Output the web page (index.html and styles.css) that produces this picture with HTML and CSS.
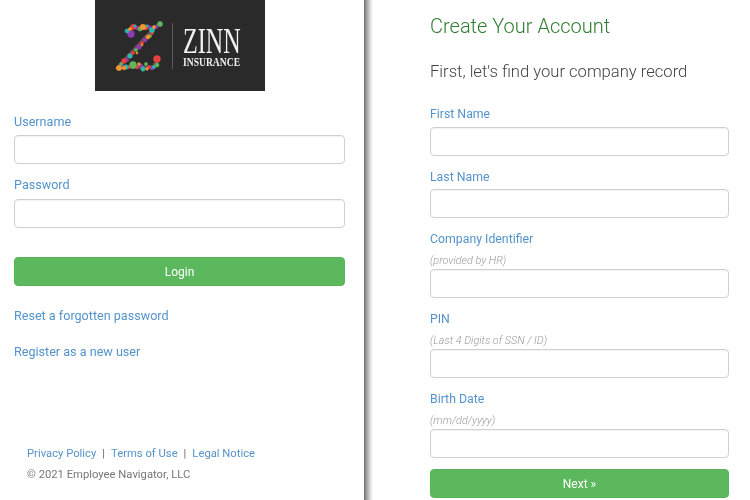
FILE: index.html
```html
<!DOCTYPE html>
<html lang="en">
<head>
<meta charset="utf-8">
<title>Create Your Account</title>
<link rel="stylesheet" href="styles.css">
</head>
<body>
<div class="page">
  <aside class="login">
    <div class="logo">
      <svg class="logo-z" width="52" height="52" viewBox="0 0 52 52" aria-hidden="true">
        <path class="z-base" d="M14 11 L20 7 L40 8 L47 4 M40 9 L5 47 L40 47 L44 40"/>
        <g class="dot-purple"><circle cx="18" cy="14" r="3.400"/><circle cx="24" cy="8" r="1.800"/><circle cx="36" cy="7" r="1.800"/><circle cx="43" cy="7" r="1.800"/><circle cx="32" cy="20" r="2"/><circle cx="26" cy="27" r="2.300"/><circle cx="14" cy="40" r="1.800"/><circle cx="28" cy="46" r="2"/><circle cx="39" cy="48" r="2"/><circle cx="9" cy="45" r="1.500"/></g>
        <g class="dot-red"><circle cx="20" cy="7" r="2.600"/><circle cx="33" cy="8" r="1.800"/><circle cx="39" cy="13" r="1.500"/><circle cx="29" cy="23" r="1.500"/><circle cx="20" cy="33" r="1.500"/><circle cx="11" cy="41" r="2.400"/><circle cx="24" cy="47" r="1.800"/><circle cx="36" cy="47" r="1.500"/><circle cx="44" cy="39" r="3.400"/><circle cx="16" cy="47" r="1.500"/></g>
        <g class="dot-green"><circle cx="27" cy="9" r="2"/><circle cx="47" cy="4" r="2.500"/><circle cx="37" cy="16" r="1.500"/><circle cx="23" cy="30" r="1.500"/><circle cx="8" cy="44" r="1.500"/><circle cx="20" cy="45" r="3.400"/><circle cx="44" cy="45" r="2"/><circle cx="33" cy="44" r="1.500"/></g>
        <g class="dot-teal"><circle cx="14" cy="11" r="2"/><circle cx="39" cy="10" r="2.500"/><circle cx="34" cy="6" r="1.200"/><circle cx="17" cy="36" r="2.300"/><circle cx="13" cy="47" r="2.200"/><circle cx="30" cy="49" r="2.200"/><circle cx="41" cy="47" r="1.500"/><circle cx="22" cy="6" r="1.200"/></g>
        <g class="dot-orange"><circle cx="30" cy="7" r="2.800"/><circle cx="17" cy="9" r="1.500"/><circle cx="35" cy="17" r="2"/><circle cx="41" cy="7" r="1.500"/><circle cx="24" cy="33" r="1"/><circle cx="6" cy="48" r="2.600"/><circle cx="11" cy="48" r="1.800"/><circle cx="26" cy="44" r="1.300"/><circle cx="34" cy="49" r="1.300"/><circle cx="29" cy="25" r="1"/></g>
      </svg>
      <span class="logo-rule"></span>
      <div class="logo-text">
        <span class="logo-name">ZINN</span>
        <span class="logo-sub">INSURANCE</span>
      </div>
    </div>
    <form class="login-form">
      <label class="field-label" for="username">Username</label>
      <input class="input" id="username" type="text">
      <label class="field-label password-label" for="password">Password</label>
      <input class="input" id="password" type="password">
      <button class="btn login-btn" type="button">Login</button>
    </form>
    <a class="side-link reset-link" href="#">Reset a forgotten password</a>
    <a class="side-link register-link" href="#">Register as a new user</a>
    <footer class="legal">
      <div class="legal-links"><a href="#">Privacy Policy</a><span class="sep">|</span><a href="#">Terms of Use</a><span class="sep">|</span><a href="#">Legal Notice</a></div>
      <div class="copyright">© 2021 Employee Navigator, LLC</div>
    </footer>
  </aside>
  <div class="divider"></div>
  <main class="signup">
    <h1 class="title">Create Your Account</h1>
    <h2 class="subtitle">First, let's find your company record</h2>
    <form class="signup-form">
      <div class="group group-first"><label class="field-label" for="first">First Name</label><input class="input" id="first" type="text"></div>
      <div class="group"><label class="field-label" for="last">Last Name</label><input class="input" id="last" type="text"></div>
      <div class="group"><label class="field-label" for="company">Company Identifier</label><div class="hint">(provided by HR)</div><input class="input" id="company" type="text"></div>
      <div class="group"><label class="field-label" for="pin">PIN</label><div class="hint">(Last 4 Digits of SSN / ID)</div><input class="input" id="pin" type="text"></div>
      <div class="group"><label class="field-label" for="birth">Birth Date</label><div class="hint">(mm/dd/yyyy)</div><input class="input" id="birth" type="text"></div>
      <button class="btn next-btn" type="button">Next »</button>
    </form>
  </main>
</div>
</body>
</html>
```
FILE: styles.css
```css
* { box-sizing: border-box; }
html, body { margin: 0; padding: 0; }
body {
  width: 750px;
  height: 500px;
  overflow: hidden;
  background: #fff;
  font-family: Roboto, "Liberation Sans", sans-serif;
  color: #555;
}
.page { display: flex; height: 500px; filter: blur(0.4px); }
.login { width: 364px; flex: none; padding: 0 19px 0 14px; display: flex; flex-direction: column; }
.divider {
  width: 9px;
  flex: none;
  background: linear-gradient(to right, #6f6f6f, #a9a9a9 35%, #e2e2e2 75%, #fff);
}
.signup { flex: 1; padding: 15px 21px 0 57px; min-width: 0; }

.logo {
  width: 170px;
  height: 91px;
  margin-left: 81px;
  background: #2a2a2a;
  display: flex;
  align-items: flex-start;
  padding-left: 18px;
  flex: none;
}
.logo-z { flex: none; margin-top: 20px; }
.z-base { fill: none; stroke: #6b4a55; stroke-width: 3; }
.dot-purple circle, .dot-red circle, .dot-green circle, .dot-teal circle, .dot-orange circle { stroke-width: .7; }
.dot-purple { fill: #8e3ab5; stroke: #8e3ab5; }
.dot-red { fill: #e8413c; stroke: #e8413c; }
.dot-green { fill: #5cb85c; stroke: #5cb85c; }
.dot-teal { fill: #2fb8a8; stroke: #2fb8a8; }
.dot-orange { fill: #f0972e; stroke: #f0972e; }
.logo-rule { width: 1px; height: 46px; background: #5a5a5a; margin: 23px 10px 0 7px; flex: none; }
.logo-text { display: flex; flex-direction: column; width: 60px; margin-top: 28px; color: #f0f0f0; white-space: nowrap; }
.logo-name { font-family: "Liberation Serif", serif; font-size: 36px; line-height: 26px; transform: scaleX(.67); transform-origin: left; }
.logo-sub { font-family: "Liberation Serif", serif; font-weight: 700; font-size: 12px; line-height: 10px; margin-top: 3px; transform: scaleX(.8); transform-origin: left; }

.field-label { display: block; font-size: 12.600px; line-height: 16px; color: #5593cb; }
.input {
  display: block;
  width: 100%;
  height: 29px;
  padding: 0 10px;
  background: #fff;
  border: 1px solid #d0d0d0;
  border-radius: 4px;
  box-shadow: inset 0 1px 1px rgba(0,0,0,.05);
  outline: none;
}
.btn {
  display: block;
  width: 100%;
  height: 29px;
  background: #5cb85c;
  border: 1px solid #57b557;
  border-radius: 4px;
  color: #fff;
  font: 12px/1 Roboto, "Liberation Sans", sans-serif;
  padding: 0;
}

.login-form { margin-top: 23px; }
.login-form .input { margin-top: 5px; }
.password-label { margin-top: 13px; padding-bottom: 1px; }
.login-btn { margin-top: 29px; }
.side-link { display: block; font-size: 12.600px; line-height: 16px; color: #5593cb; text-decoration: none; }
.reset-link { margin-top: 22px; }
.register-link { margin-top: 20px; }
.legal { margin-top: auto; padding: 0 0 18px 13px; font-size: 11.250px; line-height: 14px; }
.legal-links a { color: #5593cb; text-decoration: none; }
.sep { margin: 0 6px; color: #666; }
.copyright { margin-top: 7px; color: #777; }

.title { margin: 0; font-size: 20px; line-height: 22px; font-weight: 300; color: #2f7d32; }
.subtitle { margin: 25px 0 0; font-size: 16.600px; line-height: 20px; font-weight: 300; color: #444; }
.signup-form { margin-top: 24px; }
.group { margin-top: 13px; }
.group-first { margin-top: 0; }
.group .field-label { font-size: 12.300px; }
.group .input { margin-top: 4px; }
.group-first .input { margin-top: 5px; }
.hint { margin-top: 8px; font-size: 10.800px; line-height: 12px; font-style: italic; font-weight: 300; color: #999; }
.group .hint + .input { margin-top: 2px; }
.next-btn { margin-top: 11px; }
```
